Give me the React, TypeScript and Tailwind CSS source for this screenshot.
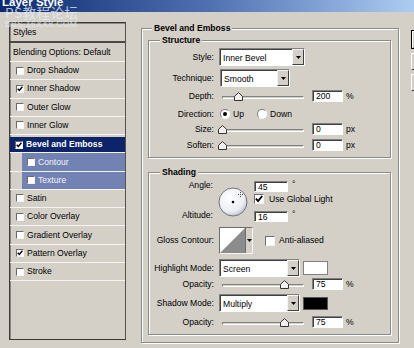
import React from 'react';

const Tick = ({ size = 7 }: { size?: number }) => (
  <svg width={size} height={size} viewBox="0 0 7 7">
    <path d="M0.8 3.2 L2.7 5.3 L6.3 0.9" stroke="#000" strokeWidth="1.6" fill="none" />
  </svg>
);

const CheckBox = ({ checked = false, big = false }: { checked?: boolean; big?: boolean }) => (
  <span
    className={`flex shrink-0 items-center justify-center border border-[#6e6c68] border-r-[#f4f4f4] border-b-[#f4f4f4] bg-white ${
      big ? 'h-[10px] w-[10px]' : 'h-[8px] w-[8px]'
    }`}
  >
    {checked && <Tick size={big ? 8 : 6} />}
  </span>
);

const Arrow = () => (
  <svg width="5" height="3" viewBox="0 0 5 3">
    <path d="M0 0 H5 L2.5 3 Z" fill="#000" />
  </svg>
);

const Select = ({ value, w }: { value: string; w: string }) => (
  <div className={`flex h-[18px] shrink-0 border border-[#808080] border-r-white border-b-white bg-white shadow-[inset_1px_1px_0_#404040] ${w}`}>
    <span className="flex-1 pl-[3px] pt-[1px] leading-[16px]">{value}</span>
    <span className="flex w-[12px] items-center justify-center border border-[#f4f4f4] border-r-[#404040] border-b-[#404040] bg-[#d4d0c8]">
      <Arrow />
    </span>
  </div>
);

const Field = ({ value, w = 'w-[31px]', h = 'h-[12px]' }: { value: string; w?: string; h?: string }) => (
  <div className={`shrink-0 border border-[#808080] border-r-white border-b-white bg-white pl-[3px] leading-[11px] shadow-[inset_1px_1px_0_#404040] ${w} ${h}`}>
    {value}
  </div>
);

const Slider = ({ pos }: { pos: number }) => (
  <div className="relative ml-[7px] h-[10px] w-[82px] shrink-0">
    <div className="absolute top-[5px] right-0 left-0 h-[3px] border border-[#808080] border-r-white border-b-white bg-[#d4d0c8]" />
    <svg className="absolute top-[1px]" style={{ left: pos }} width="9" height="9" viewBox="0 0 9 9">
      <path d="M0.5 8.5 V4.3 L4.5 0.6 L8.5 4.3 V8.5 Z" fill="#f2f1ee" stroke="#333" strokeWidth="1" />
    </svg>
  </div>
);

const Label = ({ children }: { children: React.ReactNode }) => (
  <div className="w-[66px] shrink-0 pr-[1px] text-right">{children}</div>
);

const SliderRow = ({ label, pos, value, unit, cls }: { label: string; pos: number; value: string; unit: string; cls: string }) => (
  <div className={`flex h-[12px] items-center ${cls}`}>
    <Label>{label}</Label>
    <Slider pos={pos} />
    <div className="ml-[8px]">
      <Field value={value} />
    </div>
    <span className="ml-[3px]">{unit}</span>
  </div>
);

const Radio = ({ on = false }: { on?: boolean }) => (
  <span className="flex h-[10px] w-[10px] shrink-0 items-center justify-center rounded-full border border-[#808080] border-r-white border-b-white bg-white">
    {on && <span className="h-[4px] w-[4px] rounded-full bg-black" />}
  </span>
);

const styleRows = [
  { name: 'Drop Shadow', checked: false },
  { name: 'Inner Shadow', checked: true },
  { name: 'Outer Glow', checked: false },
  { name: 'Inner Glow', checked: false },
  { name: 'Bevel and Emboss', checked: true, active: true },
  { name: 'Contour', checked: false, sub: true },
  { name: 'Texture', checked: false, sub: true },
  { name: 'Satin', checked: false },
  { name: 'Color Overlay', checked: false },
  { name: 'Gradient Overlay', checked: false },
  { name: 'Pattern Overlay', checked: true },
  { name: 'Stroke', checked: false },
];

const etched = 'border border-[#8c8a85] shadow-[inset_1px_1px_0_#fff,1px_1px_0_#fff]';

export default function App() {
  return (
    <div className="relative h-[348px] w-[414px] overflow-hidden bg-[#d4d0c8] font-['Liberation_Sans',Arial,sans-serif] text-[8.6px] text-black">
      {/* Title bar */}
      <div className="h-[12px] overflow-hidden bg-linear-to-r from-[#0c2a70] via-[#4f70b0] to-[#aecdf2]">
        <span className="-mt-[4px] block pl-[2px] text-[11.5px] leading-[13px] font-bold text-white">Layer Style</span>
      </div>

      {/* Watermark */}
      <div className="pointer-events-none absolute top-[5px] left-[5px] flex flex-col text-[#e8eef8] opacity-75">
        <span className="font-['Noto_Sans_CJK_SC',sans-serif] text-[13.5px] leading-[14px] tracking-[0.5px]">PS教程论坛</span>
        <span className="mt-[1px] text-[8.5px] leading-[8px] tracking-[0.4px]">BBS.16XX8.COM</span>
      </div>

      <div className="flex items-start pt-[10px] pl-[9px]">
        {/* Styles list */}
        <div className="flex h-[318px] w-[117px] shrink-0 flex-col border border-[#3c3b39] border-r-[#55534f] bg-[#d4d0c8] shadow-[inset_1px_1px_0_#8a8884]">
          <div className="flex h-[20px] shrink-0 items-center border-b-2 border-b-[#4a4946] pl-[3px]">Styles</div>
          <div className="flex h-[19px] shrink-0 items-center border-b border-b-[#f4f4f2] pl-[3px]">Blending Options: Default</div>
          {styleRows.map((row) => (
            <div key={row.name} className={`h-[18.27px] shrink-0 border-b border-b-[#f4f4f2] ${row.active ? 'pt-[2px]' : ''}`}>
              <div
                className={`flex h-full items-center ${
                  row.active
                    ? 'bg-[#0d2568] pl-[5px] font-bold text-white'
                    : row.sub
                      ? 'ml-[12px] bg-[#7282b2] pl-[5px] text-[#f2f3f8]'
                      : 'pl-[6px]'
                }`}
              >
                <CheckBox checked={row.checked} />
                <span className="ml-[3px]">{row.name}</span>
              </div>
            </div>
          ))}
        </div>

        {/* Bevel and Emboss */}
        <fieldset className={`mt-[1px] ml-[15px] w-[258px] shrink-0 pb-[7px] ${etched}`}>
          <legend className="ml-[10px] bg-[#d4d0c8] px-[2px] leading-[10px] font-bold">Bevel and Emboss</legend>

          <fieldset className={`mt-[2px] ml-[6px] w-[243px] pb-[6px] ${etched}`}>
            <legend className="ml-[11px] bg-[#d4d0c8] px-[2px] leading-[10px] font-bold">Structure</legend>

            <div className="mt-[3px] flex h-[18px] items-center">
              <Label>Style:</Label>
              <div className="ml-[4px]">
                <Select value="Inner Bevel" w="w-[86px]" />
              </div>
            </div>
            <div className="mt-[3px] flex h-[18px] items-center">
              <Label>Technique:</Label>
              <div className="ml-[5px]">
                <Select value="Smooth" w="w-[70px]" />
              </div>
            </div>
            <SliderRow label="Depth:" pos={12} value="200" unit="%" cls="mt-[3px]" />
            <div className="mt-[5px] flex h-[14px] items-center">
              <Label>Direction:</Label>
              <div className="ml-[5px]">
                <Radio on />
              </div>
              <span className="ml-[3px]">Up</span>
              <div className="ml-[13px]">
                <Radio />
              </div>
              <span className="ml-[3px]">Down</span>
            </div>
            <SliderRow label="Size:" pos={-4} value="0" unit="px" cls="mt-[2px]" />
            <SliderRow label="Soften:" pos={-4} value="0" unit="px" cls="mt-[4px]" />
          </fieldset>

          <fieldset className={`mt-[9px] ml-[6px] w-[243px] pb-[6px] ${etched}`}>
            <legend className="ml-[11px] bg-[#d4d0c8] px-[2px] leading-[10px] font-bold">Shading</legend>

            <div className="mt-[3px] flex h-[42px]">
              <div className="flex w-[66px] shrink-0 flex-col items-end justify-between pr-[2px] leading-[10px]">
                <span>Angle:</span>
                <span className="mb-[2px]">Altitude:</span>
              </div>
              <svg className="mt-[7px] ml-[3px] shrink-0" width="30" height="30" viewBox="0 0 30 30">
                <defs>
                  <radialGradient id="dial" cx="40%" cy="35%" r="70%">
                    <stop offset="0%" stopColor="#ffffff" />
                    <stop offset="70%" stopColor="#eceef4" />
                    <stop offset="100%" stopColor="#b8bcc8" />
                  </radialGradient>
                </defs>
                <circle cx="15" cy="15" r="14" fill="url(#dial)" stroke="#6f7382" strokeWidth="1" />
                <circle cx="15" cy="15" r="1.3" fill="#000" />
                <path d="M22.5 5 V10 M20 7.5 H25" stroke="#444" strokeWidth="1" strokeDasharray="1 1" />
              </svg>
              <div className="ml-[6px] flex flex-col">
                <div className="flex h-[12px] items-center">
                  <Field value="45" w="w-[34px]" h="h-[11px]" />
                  <span className="ml-[4px] -mt-[4px]">°</span>
                </div>
                <div className="mt-[2px] flex h-[10px] items-center">
                  <CheckBox checked big />
                  <span className="ml-[5px]">Use Global Light</span>
                </div>
                <div className="mt-[6px] flex h-[12px] items-center">
                  <Field value="16" w="w-[34px]" h="h-[11px]" />
                  <span className="ml-[4px] -mt-[4px]">°</span>
                </div>
              </div>
            </div>

            <div className="mt-[5px] flex h-[27px] items-center">
              <Label>Gloss Contour:</Label>
              <div className="ml-[4px] flex h-[27px] w-[34px] shrink-0 border border-[#6e6c68] border-r-[#f4f4f4] border-b-[#f4f4f4] bg-white">
                <svg width="25" height="25" viewBox="0 0 25 25" className="shrink-0">
                  <path d="M0 25 L25 0 V25 Z" fill="#8c8c8c" />
                </svg>
                <span className="flex flex-1 items-center justify-center border-l border-l-[#6e6c68] bg-[#d4d0c8]">
                  <Arrow />
                </span>
              </div>
              <div className="ml-[12px]">
                <CheckBox big />
              </div>
              <span className="ml-[4px]">Anti-aliased</span>
            </div>

            <div className="mt-[5px] flex h-[18px] items-center">
              <Label>Highlight Mode:</Label>
              <div className="ml-[4px]">
                <Select value="Screen" w="w-[81px]" />
              </div>
              <div className="ml-[3px] h-[14px] w-[25px] shrink-0 border border-[#808080] bg-white" />
            </div>
            <SliderRow label="Opacity:" pos={58} value="75" unit="%" cls="mt-[1px]" />

            <div className="mt-[4px] flex h-[18px] items-center">
              <Label>Shadow Mode:</Label>
              <div className="ml-[4px]">
                <Select value="Multiply" w="w-[81px]" />
              </div>
              <div className="ml-[3px] h-[13px] w-[25px] shrink-0 border border-[#555] bg-black" />
            </div>
            <SliderRow label="Opacity:" pos={58} value="75" unit="%" cls="mt-[4px]" />
          </fieldset>
        </fieldset>

        {/* Dialog buttons (cut off at the edge) */}
        <div className="mt-[8px] ml-[12px] flex w-[60px] shrink-0 flex-col gap-[4px]">
          <div className="h-[19px] border border-black shadow-[inset_1px_1px_0_#fff,inset_-1px_-1px_0_#808080]" />
          <div className="h-[17px] border border-[#fff] border-r-[#404040] border-b-[#404040]" />
          <div className="h-[17px] border border-[#fff] border-r-[#404040] border-b-[#404040]" />
        </div>
      </div>
    </div>
  );
}
